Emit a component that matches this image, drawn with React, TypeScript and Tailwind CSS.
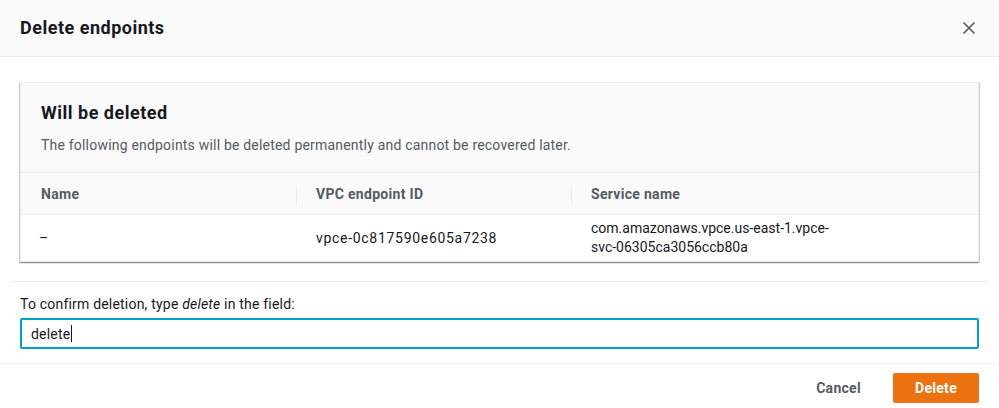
import { X } from 'lucide-react';

const font = { fontFamily: 'Roboto, "Liberation Sans", Arial, sans-serif' };

function HeaderCell({ label, divider }: { label: string; divider?: boolean }) {
  return (
    <div className="relative flex items-center px-5 text-sm font-bold tracking-[0.3px] text-[#545b64]">
      {divider && <span className="absolute left-0 top-3 h-5 w-px bg-[#eaeded]" />}
      {label}
    </div>
  );
}

export default function App() {
  return (
    <div className="h-[408px] w-[999px] bg-white tracking-[0.2px] text-[#16191f]" style={font}>
      <div className="flex h-[57px] items-center justify-between border-b border-[#eaeded] bg-[#fafafa] pl-5 pr-5">
        <h1 className="text-lg font-bold tracking-[0.5px]">Delete endpoints</h1>
        <X className="size-5 text-[#545b64]" strokeWidth={2} />
      </div>

      <div className="px-5 pt-[25px]">
        <div className="border border-[#eaeded] bg-white shadow-[0_1px_1px_0_rgba(0,28,36,0.3),1px_1px_1px_0_rgba(0,28,36,0.15),-1px_1px_1px_0_rgba(0,28,36,0.15)]">
          <div className="h-[89px] bg-[#fafafa] px-5 pt-[18px]">
            <h2 className="text-lg font-bold leading-6 tracking-[0.5px]">Will be deleted</h2>
            <p className="mt-[10px] text-sm text-[#545b64]">
              The following endpoints will be deleted permanently and cannot be recovered later.
            </p>
          </div>
          <div className="grid h-[43px] grid-cols-[275px_275px_1fr] border-y border-[#eaeded] bg-[#fafafa]">
            <HeaderCell label="Name" />
            <HeaderCell label="VPC endpoint ID" divider />
            <HeaderCell label="Service name" divider />
          </div>
          <div className="grid h-[46px] grid-cols-[275px_275px_1fr] items-center text-sm">
            <div className="pl-[18px]">–</div>
            <div className="pl-5 tracking-[0.7px]">vpce-0c817590e605a7238</div>
            <div className="pl-5 leading-[19px] tracking-normal">
              com.amazonaws.vpce.us-east-1.vpce-
              <br />
              svc-06305ca3056ccb80a
            </div>
          </div>
        </div>
      </div>

      <div className="mx-[10px] mt-[19px] border-t border-[#eaeded]" />

      <div className="px-5 pt-[12px]">
        <label className="block text-sm leading-5">
          To confirm deletion, type <em>delete</em> in the field:
        </label>
        <div className="mt-[4px] flex h-[31px] items-center rounded-[2px] border-2 border-[#00a1c9] px-[9px] text-sm">
          delete<span className="ml-px h-[17px] w-px bg-[#16191f]" />
        </div>
      </div>

      <div className="mt-[14px] border-t border-[#eaeded]" />

      <div className="flex items-center justify-end gap-8 px-5 pt-[9px]">
        <button className="text-sm font-bold tracking-[0.3px] text-[#545b64]">Cancel</button>
        <button className="h-[30px] w-[86px] rounded-[2px] bg-[#ec7211] text-sm font-bold tracking-[0.3px] text-white">
          Delete
        </button>
      </div>
    </div>
  );
}
